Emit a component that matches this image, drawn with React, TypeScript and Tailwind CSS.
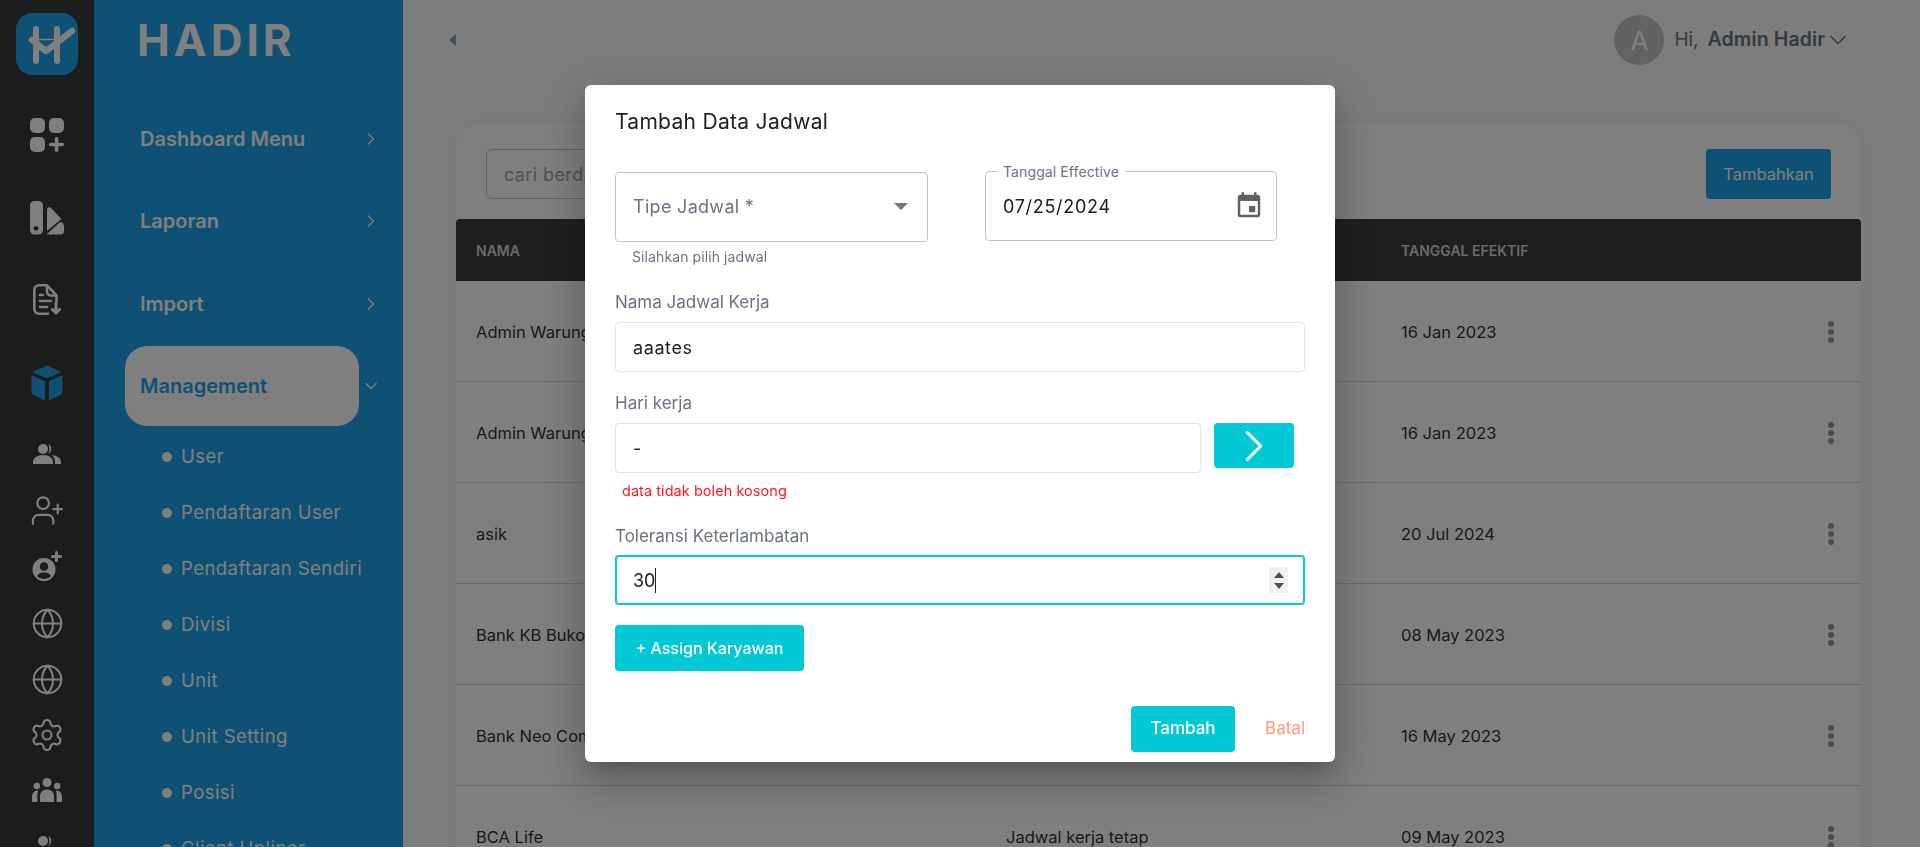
import { Globe, Settings, UserPlus, ChevronRight, ChevronDown } from "lucide-react";
import { MdEvent } from "react-icons/md";

const FONT = "font-['Inter','Liberation_Sans',sans-serif]";

function AppsAdd() {
  return (
    <svg width="34" height="34" viewBox="0 0 34 34" fill="currentColor">
      <rect x="0" y="0" width="15" height="15" rx="5" />
      <rect x="19" y="0" width="15" height="15" rx="5" />
      <rect x="0" y="19" width="15" height="15" rx="5" />
      <rect x="24.8" y="19" width="3.6" height="15" rx="1.8" />
      <rect x="19" y="24.7" width="15" height="3.6" rx="1.8" />
    </svg>
  );
}

function Swatch() {
  return (
    <svg width="34" height="34" viewBox="0 0 34 34" fill="currentColor">
      <rect x="0" y="0" width="13" height="33.5" rx="4.5" />
      <circle cx="6" cy="27.3" r="2.4" fill="#383838" />
      <path d="M17 9c0-2 1.5-3 3-2.500 1 .3 1.500.8 2 1.500L31.500 18 17 30z" />
      <path d="M16.500 33.500 29 22c2-1.500 3.500-.5 4.500 1 .4.8.5 1.500.5 2.500V30a3.500 3.500 0 0 1-3.500 3.500z" />
    </svg>
  );
}

function FileDown() {
  return (
    <svg width="28" height="31" viewBox="0 0 28 31" fill="none" stroke="currentColor" strokeWidth="2.6" strokeLinecap="round" strokeLinejoin="round">
      <path d="M15 29.700H6a4.700 4.700 0 0 1-4.700-4.700V6A4.700 4.700 0 0 1 6 1.300h8l9.500 10V17" />
      <path d="M14 2v5.500a4 4 0 0 0 4 4h5" />
      <path d="M7 11h3M7 17h11M7 23h7" />
      <path d="M23 19v10M19.500 25.500l3.500 3.500 3.500-3.500" strokeWidth="3" />
    </svg>
  );
}

function Cube() {
  return (
    <svg width="32" height="36" viewBox="0 0 32 36" fill="#1ca2e8">
      <path d="M16 0.500 30.500 7 16 13.500 1.500 7z" />
      <path d="M0.500 10 14 16.200V35.500L2.500 30c-1.300-.6-2-1.500-2-3z" />
      <path d="M31.500 10 18 16.200V35.500L29.500 30c1.300-.6 2-1.500 2-3z" />
    </svg>
  );
}

function FacePlus() {
  return (
    <svg width="30" height="30" viewBox="0 0 30 30" fill="currentColor">
      <path fillRule="evenodd" d="M12 7a11.500 11.500 0 1 0 0 23 11.500 11.500 0 0 0 0-23zm0 4.200a4.300 4.300 0 1 1 0 8.600 4.300 4.300 0 0 1 0-8.600zM5 25c1-2.500 4-3.500 7-3.500s6 1 7 3.500a9.500 9.500 0 0 1-14 0z" />
      <rect x="23" y="0" width="3" height="11" rx="1.500" />
      <rect x="19" y="4" width="11" height="3" rx="1.500" />
    </svg>
  );
}

function People() {
  return (
    <svg width="28" height="20" viewBox="0 0 28 20" fill="currentColor">
      <circle cx="10" cy="5" r="5" />
      <path d="M0 20v-2c0-4 4-7 10-7s10 3 10 7v2z" />
      <path d="M15 .3a5 5 0 0 1 0 9.400A6 6 0 0 0 16.500 5 6 6 0 0 0 15 .3z" />
      <path d="M19 11.300c5 .3 9 2.700 9 6.700v2h-6v-2c0-2.800-1.200-5-3-6.700z" />
    </svg>
  );
}

function Groups() {
  return (
    <svg width="30" height="24" viewBox="0 0 30 24" fill="currentColor">
      <circle cx="15" cy="4.500" r="4.500" />
      <circle cx="4.800" cy="8" r="3.200" />
      <circle cx="25.200" cy="8" r="3.200" />
      <path d="M8 24v-6c0-4 3-6.500 7-6.500s7 2.500 7 6.500v6z" />
      <path d="M0 24v-5c0-4 2-6.500 6.300-6.500C5 14 5.500 20 5.500 24z" />
      <path d="M30 24v-5c0-4-2-6.500-6.300-6.500C25 14 24.500 20 24.500 24z" />
    </svg>
  );
}

function Logo() {
  return (
    <svg width="62" height="62" viewBox="0 0 62 62" fill="none" stroke="#fff" strokeLinecap="round" strokeLinejoin="round">
      <path d="M20 16v32M41 16v32" strokeWidth="6" />
      <path d="M23 26.500h15" strokeWidth="1.500" />
      <path d="M16 27 30 38 56 18" strokeWidth="6.500" />
    </svg>
  );
}

const rail = [
  { y: "h-[82px]", icon: <AppsAdd /> },
  { y: "h-[82px] pt-px", icon: <Swatch /> },
  { y: "h-[82px]", icon: <FileDown /> },
  { y: "h-[86px]", icon: <Cube /> },
  { y: "h-[56px]", icon: <People /> },
  { y: "h-[56px]", icon: <UserPlus size={35} strokeWidth={1.5} /> },
  { y: "h-[56px]", icon: <FacePlus /> },
  { y: "h-[56px] pt-[2px]", icon: <Globe size={33} strokeWidth={1.5} /> },
  { y: "h-[56px] pt-[2px]", icon: <Globe size={33} strokeWidth={1.5} /> },
  { y: "h-[56px] pt-[2px]", icon: <Settings size={36} strokeWidth={1.4} /> },
  { y: "h-[56px]", icon: <Groups /> },
  { y: "h-[56px]", icon: <People /> },
];

const subs = ["User", "Pendaftaran User", "Pendaftaran Sendiri", "Divisi", "Unit", "Unit Setting", "Posisi", "Client Upliner"];

const rows = [
  ["Admin Warung", "16 Jan 2023"],
  ["Admin Warung", "16 Jan 2023"],
  ["asik", "20 Jul 2024"],
  ["Bank KB Bukopin", "08 May 2023"],
  ["Bank Neo Commerce", "16 May 2023"],
  ["BCA Life", "09 May 2023"],
];

function NavItem({ label, mb }: { label: string; mb: string }) {
  return (
    <div className={`flex items-center justify-between h-[60px] pl-[46px] pr-[22px] text-white ${mb}`}>
      <span className="text-[20px] font-semibold">{label}</span>
      <ChevronRight size={20} strokeWidth={1.5} />
    </div>
  );
}

function Label({ children, className }: { children: React.ReactNode; className: string }) {
  return <div className={`h-6 text-[17px] leading-6 text-[#6b7280] ${className}`}>{children}</div>;
}

export default function App() {
  return (
    <div className={`h-[847px] w-[1920px] overflow-hidden flex bg-[#f9fbfa] ${FONT}`}>
      <aside className="w-[94px] shrink-0 bg-[#383838] flex flex-col items-center text-white pt-[13px] overflow-hidden">
        <div className="w-[62px] h-[62px] shrink-0 rounded-[16px] bg-[#1ca2e8] flex items-center justify-center mb-[19px]">
          <Logo />
        </div>
        {rail.map((r, i) => (
          <div key={i} className={`${r.y} w-full shrink-0 flex items-center justify-center`}>
            {r.icon}
          </div>
        ))}
      </aside>

      <aside className="w-[309px] shrink-0 bg-[#1ca2e8] overflow-hidden">
        <div className="h-[109px] pl-[43px] pt-[12px] text-white text-[44px] leading-[56px] font-bold tracking-[4px]">HADIR</div>
        <NavItem label="Dashboard Menu" mb="mb-[22px]" />
        <NavItem label="Laporan" mb="mb-[23px]" />
        <NavItem label="Import" mb="mb-[12px]" />
        <div className="flex items-center pl-[31px] pr-[22px]">
          <div className="w-[234px] h-[80px] rounded-[22px] bg-white flex items-center pl-[15px] text-[#1ca2e8] text-[20px] font-semibold">
            Management
          </div>
          <ChevronDown size={20} strokeWidth={1.5} className="ml-auto text-white" />
        </div>
        <div className="pl-[68px] pt-[3px]">
          {subs.map((s) => (
            <div key={s} className="h-[56px] flex items-center text-white text-[18.500px] tracking-[0.45px]">
              <span className="w-[10px] h-[10px] rounded-full bg-white mr-[9px]" />
              <span>{s}</span>
            </div>
          ))}
        </div>
      </aside>

      <main className="flex-1 min-w-0 pl-[53px] pr-[59px]">
        <header className="h-[124px] pb-[44px] flex items-center justify-between">
          <span className="w-0 h-0 -ml-[7px] border-y-[6px] border-y-transparent border-r-[7px] border-r-[#8d99b3]" />
          <div className="flex items-center text-[#6b7280] mr-[9px]">
            <span className="w-[50px] h-[50px] rounded-full bg-[#c4c4c4] text-white flex items-center justify-center text-[26px]">A</span>
            <span className="ml-[10px] text-[19px]">Hi,</span>
            <span className="ml-[9px] text-[19.500px] tracking-[0.1px] font-semibold">Admin Hadir</span>
            <ChevronDown size={28} strokeWidth={1.3} className="-ml-px" />
          </div>
        </header>

        <section className="bg-white rounded-t-[24px] shadow-[0_0_30px_rgba(0,0,0,0.03)]">
          <div className="flex items-center justify-between px-[30px] pt-[25px] pb-[20px]">
            <div className="w-[320px] h-[50px] border border-[#c4c4c4] rounded-[6px] pl-[17px] flex items-center text-[18px] tracking-[0.4px] text-[#9ca3af]">
              cari berdasarkan nama
            </div>
            <div className="w-[125px] h-[50px] rounded-[4px] bg-[#1ca2e8] text-white flex items-center justify-center text-[16.500px]">Tambahkan</div>
          </div>
          <div className="h-[62px] bg-[#3c3c3c] rounded-t-[4px] grid grid-cols-[530px_395px_1fr] pl-[20px] items-center text-[14px] font-semibold text-[#d1d5db]">
            <span>NAMA</span>
            <span>TIPE JADWAL</span>
            <span>TANGGAL EFEKTIF</span>
          </div>
          {rows.map(([name, date], i) => (
            <div key={i} className="h-[101px] pt-[2px] border-b border-[#d8d8d8] grid grid-cols-[530px_395px_1fr] pl-[20px] pr-[27px] items-center text-[16.500px] text-[#333]">
              <span>{name}</span>
              <span>Jadwal kerja tetap</span>
              <div className="flex items-center justify-between">
                <span>{date}</span>
                <span className="flex flex-col gap-[2px]">
                  <i className="w-[6px] h-[6px] rounded-full bg-[#999]" />
                  <i className="w-[6px] h-[6px] rounded-full bg-[#999]" />
                  <i className="w-[6px] h-[6px] rounded-full bg-[#999]" />
                </span>
              </div>
            </div>
          ))}
        </section>
      </main>

      <div className="fixed inset-0 bg-black/50 flex items-center justify-center">
        <div className="w-[750px] h-[677px] bg-white rounded-[6px] px-[30px] pt-[23px] shadow-[0_11px_15px_-7px_rgba(0,0,0,0.2),0_24px_38px_3px_rgba(0,0,0,0.14),0_9px_46px_8px_rgba(0,0,0,0.12)]">
          <div className="h-7 text-[21px] leading-7 tracking-[0.3px] text-[#212121]">Tambah Data Jadwal</div>

          <div className="mt-[35px] flex items-start">
            <div className="w-[313px] mt-px">
              <div className="h-[70px] pb-[2px] border border-[#c4c4c4] rounded-[4px] pl-[17px] pr-[19px] flex items-center justify-between">
                <span className="text-[18px] tracking-[0.3px] text-[#6b7280]">Tipe Jadwal *</span>
                <span className="w-0 h-0 border-x-[7px] border-x-transparent border-t-[7px] border-t-[#757575]" />
              </div>
              <div className="mt-[5px] h-5 pl-[17px] text-[14px] tracking-[0.1px] leading-5 text-[#6b7280]">Silahkan pilih jadwal</div>
            </div>
            <div className="relative ml-[57px] w-[292px] h-[70px] border border-[#c4c4c4] rounded-[4px] pl-[17px] pr-[12px] flex items-center justify-between">
              <span className="absolute left-[11px] -top-[9px] bg-white px-[6px] text-[14px] tracking-[0.1px] leading-[18px] text-[#6b7280]">Tanggal Effective</span>
              <span className="text-[18px] tracking-[0.7px] text-[#212121]">07/25/2024</span>
              <MdEvent size={30} className="text-[#616161]" />
            </div>
          </div>

          <Label className="mt-[23px]">Nama Jadwal Kerja</Label>
          <div className="mt-2 h-[50px] border border-[#e2e5e9] rounded-[4px] pl-[17px] flex items-center text-[18px] tracking-[0.6px] text-[#212121]">aaates</div>

          <Label className="mt-[19px]">Hari kerja</Label>
          <div className="mt-2 flex items-start">
            <div className="w-[586px] h-[50px] border border-[#e2e5e9] rounded-[4px] pl-[17px] flex items-center text-[18px] text-[#212121]">-</div>
            <div className="ml-[13px] w-[80px] h-[45px] rounded-[4px] bg-[#03c9d7] flex items-center justify-center text-white">
              <ChevronRight size={54} strokeWidth={1.4} />
            </div>
          </div>
          <div className="mt-2 h-5 pl-[7px] text-[14.500px] tracking-[0.05px] leading-5 text-[#ff1a1a]">data tidak boleh kosong</div>

          <Label className="mt-[23px]">Toleransi Keterlambatan</Label>
          <div className="mt-[7px] h-[50px] border-2 border-[#03c9d7] rounded-[4px] pl-[16px] pr-[15px] flex items-center justify-between text-[18px] text-[#212121]">
            <span className="flex items-center">
              30
              <i className="w-px h-[25px] bg-[#212121]" />
            </span>
            <span className="w-[19px] h-[26px] bg-[#f0f0f0] flex flex-col items-center justify-center gap-[5px]">
              <i className="w-0 h-0 border-x-[5px] border-x-transparent border-b-[6px] border-b-[#505050]" />
              <i className="w-0 h-0 border-x-[5px] border-x-transparent border-t-[6px] border-t-[#505050]" />
            </span>
          </div>

          <div className="mt-5 w-[189px] h-[46px] rounded-[4px] bg-[#03c9d7] text-white flex items-center justify-center text-[16px] font-medium">+ Assign Karyawan</div>

          <div className="mt-[35px] flex items-center justify-end">
            <div className="w-[104px] h-[46px] rounded-[4px] bg-[#03c9d7] text-white flex items-center justify-center text-[17px] font-medium">Tambah</div>
            <div className="ml-[30px] text-[17px] text-[#ff9a80]">Batal</div>
          </div>
        </div>
      </div>
    </div>
  );
}
